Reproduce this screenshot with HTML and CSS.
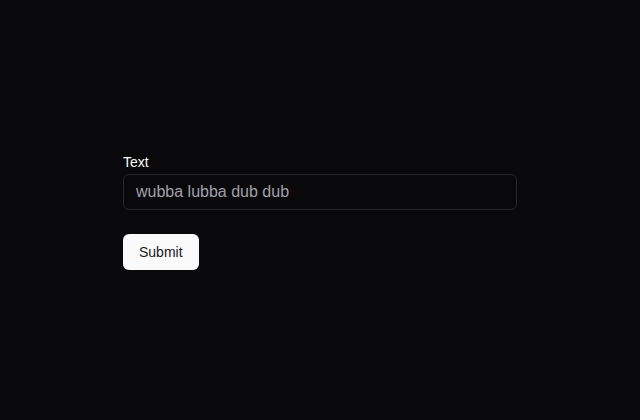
FILE: index.html
```html
<!DOCTYPE html>
<html lang="en">
<head>
<meta charset="utf-8">
<title>Form</title>
<link rel="stylesheet" href="styles.css">
</head>
<body>
<main class="page">
  <form class="form" onsubmit="return false">
    <div class="field">
      <label class="label" for="text">Text</label>
      <input class="input" id="text" type="text" placeholder="wubba lubba dub dub">
    </div>
    <button class="button" type="submit">Submit</button>
  </form>
</main>
</body>
</html>
```
FILE: styles.css
```css
* { box-sizing: border-box; }
html, body {
  margin: 0;
  height: 100%;
  background: #09090b;
  color: #fafafa;
  font-family: "Liberation Sans", Arial, sans-serif;
}
.page {
  height: 100%;
  display: flex;
  align-items: center;
  justify-content: center;
}
.form {
  width: 394px;
  display: flex;
  flex-direction: column;
  align-items: flex-start;
  gap: 24px;
  margin-top: 5px;
}
.field {
  width: 100%;
  display: flex;
  flex-direction: column;
  gap: 5px;
}
.label {
  font-size: 14px;
  line-height: 14px;
  font-weight: 500;
  color: #fafafa;
}
.input {
  width: 100%;
  height: 36px;
  padding: 0 12px;
  border: 1px solid #27272a;
  border-radius: 6px;
  background: transparent;
  color: #fafafa;
  font-family: inherit;
  font-size: 16px;
  outline: none;
}
.input::placeholder { color: #a1a1aa; }
.button {
  height: 36px;
  padding: 0 16px;
  border: none;
  border-radius: 6px;
  background: #fafafa;
  color: #18181b;
  font-family: inherit;
  font-size: 14px;
  font-weight: 500;
  cursor: pointer;
}
```
